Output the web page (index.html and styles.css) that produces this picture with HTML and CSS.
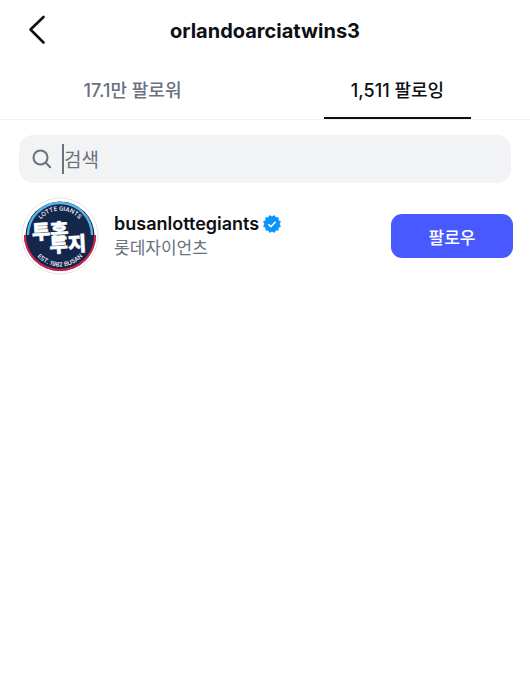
FILE: index.html
```html
<!DOCTYPE html>
<html lang="ko">
<head>
<meta charset="utf-8">
<meta name="viewport" content="width=device-width, initial-scale=1">
<title>orlandoarciatwins3</title>
<link rel="stylesheet" href="styles.css">
</head>
<body>
<header class="header">
  <button class="back" type="button" aria-label="뒤로">
    <svg width="18" height="30" viewBox="0 0 18 30" aria-hidden="true"><path d="M15.5 2 2.5 14.5 15.5 27.5" fill="none" stroke="#0c1014" stroke-width="2.6" stroke-linecap="round" stroke-linejoin="round"/></svg>
  </button>
  <h1 class="title">orlandoarciatwins3</h1>
</header>
<nav class="tabs">
  <a class="tab" href="#followers">17.1만 팔로워</a>
  <a class="tab tab-active" href="#following" aria-current="page">1,511 팔로잉</a>
</nav>
<main>
  <label class="search">
    <svg width="20" height="20" viewBox="0 0 20 20" aria-hidden="true"><g fill="none" stroke="#6a717f" stroke-width="2" stroke-linecap="round"><circle cx="8.5" cy="8.5" r="7"/><path d="m13.8 13.8 4.4 4.4"/></g></svg>
    <span class="field">
      <input class="search-input" type="text" placeholder="검색" aria-label="검색">
      <span class="caret"></span>
    </span>
  </label>
  <ul class="list">
    <li class="user">
      <svg class="avatar" width="78" height="78" viewBox="0 0 78 78" role="img" aria-label="busanlottegiants">
        <defs>
          <path id="arc-top" d="M13.5 39a25.5 25.5 0 0 1 51 0"/>
          <path id="arc-bottom" d="M8.5 39a30.5 30.5 0 0 0 61 0"/>
        </defs>
        <circle cx="39" cy="39" r="38" fill="#fff" stroke="#e4e6ea"/>
        <circle cx="39" cy="39" r="34.5" fill="#13264b"/>
        <path d="M3 38h72a36 36 0 0 1-72 0Z" fill="#13264b"/>
        <path d="M7 38a32 32 0 0 1 64 0" fill="none" stroke="#55b4e8" stroke-width="2.4"/>
        <path d="M4 38a35 35 0 0 0 70 0" fill="none" stroke="#d51f46" stroke-width="2"/>
        <text class="logo-small"><textPath href="#arc-top" startOffset="50%" text-anchor="middle">LOTTE GIANTS</textPath></text>
        <text class="logo-small"><textPath href="#arc-bottom" startOffset="50%" text-anchor="middle">EST. 1982 BUSAN</textPath></text>
        <g transform="rotate(-3 39 39)">
          <text class="logo-main" x="11" y="41">투혼</text>
          <text class="logo-main" x="28" y="55">투지</text>
        </g>
      </svg>
      <div class="info">
        <div class="name-row">
          <a class="name" href="#busanlottegiants">busanlottegiants</a>
          <svg width="18" height="18" viewBox="0 0 40 40" role="img" aria-label="인증됨"><path d="M19.998 3.094 14.638 0l-2.972 5.15H5.432v6.354L0 14.64 3.094 20 0 25.359l5.432 3.137v5.905h5.975L14.638 40l5.36-3.094L25.358 40l3.232-5.6h6.162v-6.01L40 25.359 36.905 20 40 14.641l-5.248-3.03v-6.46h-6.419L25.358 0l-5.36 3.094Z" fill="#0895f6"/><path d="m12 20.5 5.5 5.5L28 15" fill="none" stroke="#fff" stroke-width="3.6"/></svg>
        </div>
        <div class="full-name">롯데자이언츠</div>
      </div>
      <button class="follow" type="button">팔로우</button>
    </li>
  </ul>
</main>
</body>
</html>
```
FILE: styles.css
```css
* {
  box-sizing: border-box;
}

body {
  margin: 0;
  background: #fff;
  color: #0c1014;
  font-family: Inter, "Noto Sans CJK KR", sans-serif;
}

button {
  border: 0;
  padding: 0;
  font: inherit;
  cursor: pointer;
}

a {
  color: inherit;
  text-decoration: none;
}

.header {
  display: grid;
  grid-template-columns: 46px 1fr 46px;
  align-items: center;
  height: 60px;
}

.back {
  display: flex;
  justify-content: flex-end;
  background: none;
}

.title {
  margin: 0;
  padding-top: 2px;
  font-size: 20px;
  line-height: 28px;
  font-weight: 650;
  text-align: center;
}

.tabs {
  display: grid;
  grid-template-columns: 1fr 1fr;
  justify-items: center;
  height: 60px;
  border-bottom: 1px solid #f0f1f3;
}

.tab {
  display: flex;
  align-items: center;
  justify-content: center;
  width: 147px;
  border-bottom: 2px solid transparent;
  color: #6a717f;
  font-size: 18px;
  font-weight: 500;
}

.tab-active {
  border-color: #0c1014;
  color: #0c1014;
}

.search {
  display: flex;
  align-items: center;
  gap: 12px;
  height: 48px;
  margin: 15px 19px 0;
  padding: 0 13px;
  border-radius: 14px;
  background: #f2f3f5;
}

.field {
  position: relative;
  flex: 1;
}

.search-input {
  display: block;
  width: 100%;
  height: 30px;
  padding: 2px 0 0;
  border: 0;
  outline: 0;
  background: none;
  color: #0c1014;
  font: 400 19px/28px Inter, "Noto Sans CJK KR", sans-serif;
}

.search-input::placeholder {
  color: #6a717f;
  opacity: 1;
}

.caret {
  position: absolute;
  top: 0;
  left: -2px;
  width: 2px;
  height: 30px;
  background: #6a717f;
}

.list {
  margin: 0;
  padding: 14px 17px 0 21px;
  list-style: none;
}

.user {
  display: flex;
  align-items: center;
}

.avatar {
  flex: none;
}

.logo-small {
  fill: #fff;
  font-size: 6px;
  font-weight: 500;
}

.logo-main {
  fill: #fff;
  stroke: #fff;
  stroke-width: 0.5px;
  font-family: "Noto Sans CJK KR", sans-serif;
  font-size: 20px;
  font-style: oblique 8deg;
  font-weight: 900;
}

.info {
  flex: 1;
  margin-left: 15px;
}

.name-row {
  display: flex;
  align-items: center;
  gap: 4px;
}

.name {
  font-size: 18px;
  line-height: 24px;
  font-weight: 600;
}

.full-name {
  color: #6a717f;
  font-size: 17px;
  line-height: 24px;
}

.follow {
  width: 122px;
  height: 44px;
  border-radius: 11px;
  background: #485aff;
  color: #fff;
  font-size: 17px;
  font-weight: 500;
}
```
